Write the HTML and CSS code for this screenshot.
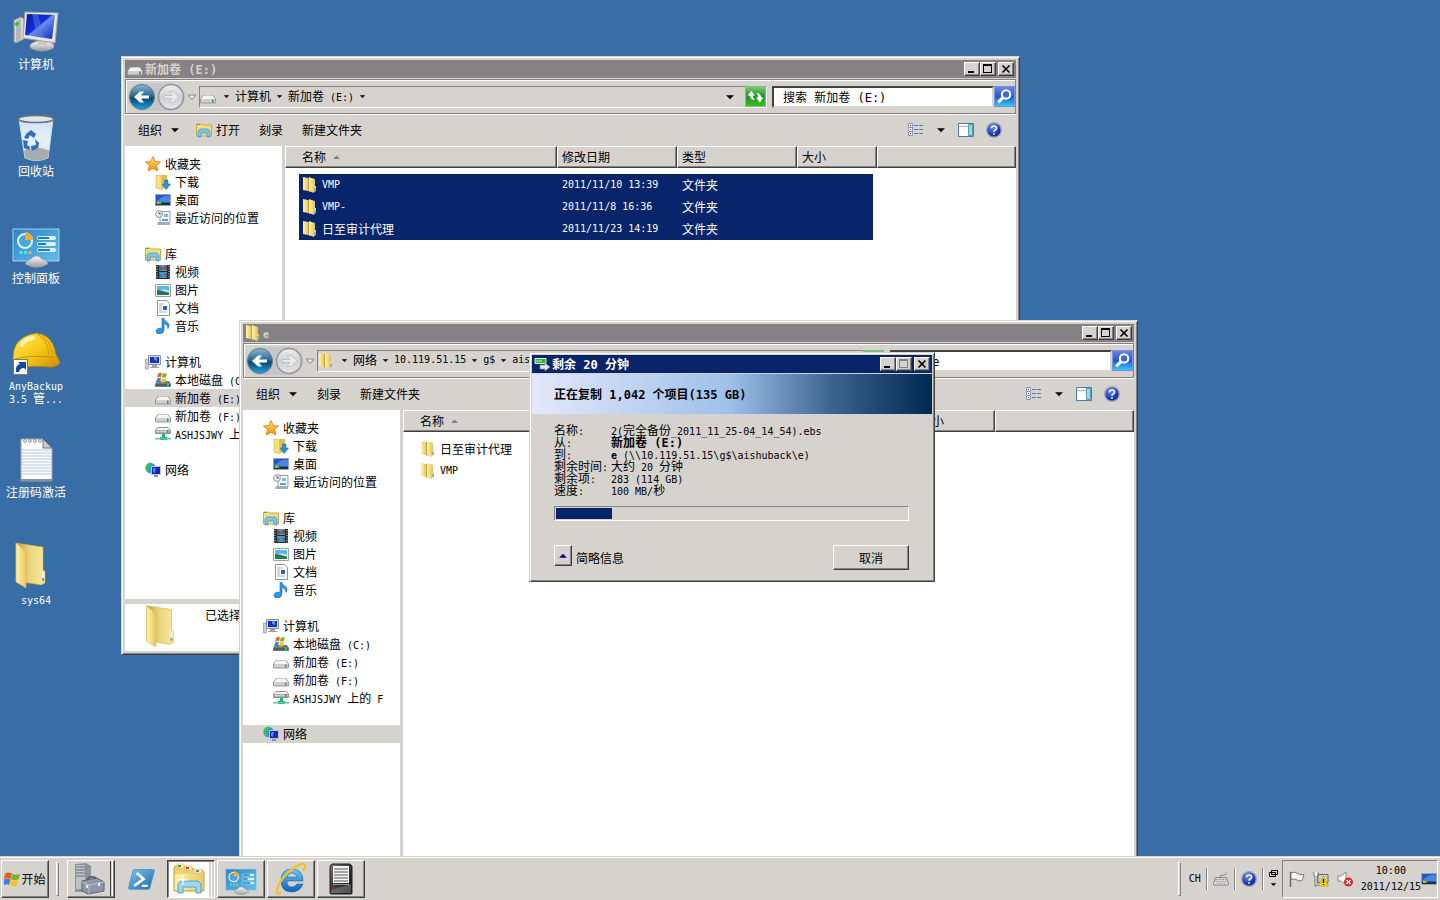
FILE: index.html
```html
<!DOCTYPE html>
<html lang="zh-CN">
<head>
<meta charset="utf-8">
<title>桌面</title>
<link rel="stylesheet" href="styles.css">
</head>
<body>
<svg class="defs" aria-hidden="true">
  <defs>
    <linearGradient id="gScreen" x1="0" y1="0" x2="1" y2="1"><stop offset="0" stop-color="#0a18a0"/><stop offset=".45" stop-color="#1230d8"/><stop offset=".5" stop-color="#6a90f0"/><stop offset="1" stop-color="#0c22b8"/></linearGradient>
    <linearGradient id="gMetal" x1="0" y1="0" x2="0" y2="1"><stop offset="0" stop-color="#fafafa"/><stop offset="1" stop-color="#9a9a9c"/></linearGradient>
    <linearGradient id="gGlass" x1="0" y1="0" x2="0" y2="1"><stop offset="0" stop-color="#cfe2f8"/><stop offset=".6" stop-color="#eaf2fb"/><stop offset="1" stop-color="#c4c8cc"/></linearGradient>
    <linearGradient id="gPanel" x1="0" y1="0" x2="1" y2="1"><stop offset="0" stop-color="#2d86c4"/><stop offset="1" stop-color="#62bdec"/></linearGradient>
    <linearGradient id="gFold" x1="0" y1="0" x2="1" y2="0"><stop offset="0" stop-color="#fdf3b0"/><stop offset="1" stop-color="#e8c95c"/></linearGradient>
    <linearGradient id="gFoldIn" x1="0" y1="0" x2="1" y2="0"><stop offset="0" stop-color="#c9a640"/><stop offset=".5" stop-color="#ecd680"/><stop offset="1" stop-color="#f8e89c"/></linearGradient>
    <linearGradient id="gHat" x1="0" y1="0" x2="1" y2="1"><stop offset="0" stop-color="#ffe65a"/><stop offset=".5" stop-color="#f8c818"/><stop offset="1" stop-color="#c88a08"/></linearGradient>
    <linearGradient id="gBack" x1="0" y1="0" x2="0" y2="1"><stop offset="0" stop-color="#8ab8d4"/><stop offset=".45" stop-color="#2a6a98"/><stop offset=".55" stop-color="#0b4674"/><stop offset="1" stop-color="#18a8e4"/></linearGradient>
    <linearGradient id="gFwd" x1="0" y1="0" x2="0" y2="1"><stop offset="0" stop-color="#eceef0"/><stop offset=".5" stop-color="#cfd1d3"/><stop offset="1" stop-color="#e4e5e6"/></linearGradient>
    <linearGradient id="gGreen" x1="0" y1="0" x2="0" y2="1"><stop offset="0" stop-color="#7cca78"/><stop offset=".5" stop-color="#1f9424"/><stop offset="1" stop-color="#37c418"/></linearGradient>
    <linearGradient id="gSearch" x1="0" y1="0" x2="0" y2="1"><stop offset="0" stop-color="#6c86e8"/><stop offset=".5" stop-color="#2454dc"/><stop offset="1" stop-color="#30d0f8"/></linearGradient>
    <radialGradient id="gHelp" cx=".4" cy=".3" r=".8"><stop offset="0" stop-color="#6a8cf0"/><stop offset=".6" stop-color="#1c3cb8"/><stop offset="1" stop-color="#0c1c80"/></radialGradient>
    <linearGradient id="gStar" x1="0" y1="0" x2="0" y2="1"><stop offset="0" stop-color="#ffe070"/><stop offset="1" stop-color="#f89010"/></linearGradient>
    <linearGradient id="gPs" x1="0" y1="0" x2="1" y2="1"><stop offset="0" stop-color="#7cc4f0"/><stop offset="1" stop-color="#1c68b0"/></linearGradient>
    <linearGradient id="gIe" x1="0" y1="0" x2="0" y2="1"><stop offset="0" stop-color="#6cc8f8"/><stop offset="1" stop-color="#0c60b8"/></linearGradient>
    <linearGradient id="gDark" x1="0" y1="0" x2="1" y2="1"><stop offset="0" stop-color="#777"/><stop offset=".5" stop-color="#333"/><stop offset="1" stop-color="#111"/></linearGradient>
  </defs>

  <symbol id="d-computer" viewBox="0 0 48 48">
    <path d="M2 14l7-3 3 2v20l-8 4-2-1z" fill="#d8d8d8" stroke="#8e8e90"/>
    <path d="M4 15l5-2v20l-5 3z" fill="#b4b6b8"/><circle cx="5" cy="18" r="2" fill="#28c828"/>
    <ellipse cx="30" cy="40" rx="12" ry="5" fill="url(#gMetal)" stroke="#a8a8a8" stroke-width=".6"/>
    <path d="M26 32h9v7h-9z" fill="#c8c8ca"/>
    <path d="M13 6l33 1-3 30-32-5z" fill="#e8e6de" stroke="#aaa69a"/>
    <path d="M15 8l28 1-3 24-27-4z" fill="url(#gScreen)"/>
    <path d="M20 8h6l6 23-7-1z" fill="#5c7ce8" opacity=".5"/>
  </symbol>
  <symbol id="d-bin" viewBox="0 0 48 48">
    <path d="M7 6h34l-5 39q-12 5-23 0z" fill="url(#gGlass)" stroke="#d8e0e8"/>
    <path d="M12 38q12-7 25 0l-1 7q-12 5-23 0z" fill="#a8acb0"/>
    <ellipse cx="24" cy="6" rx="17.500" ry="3.500" fill="#dfe7ef" stroke="#707478" stroke-width="1.600"/>
    <g fill="#2a6cc8"><path d="M14 21l5-4 5 4-2 4-4-3-2 4-4-1z"/><path d="M11 27l5 1-1 4 3 2-1 3-5-2z"/><path d="M19 33l5-1-1-6 4 4-1 5-6 3z"/></g>
  </symbol>
  <symbol id="d-panel" viewBox="0 0 48 48">
    <path d="M1 9h46v32H1z" fill="url(#gPanel)" stroke="#9ad4f0"/>
    <circle cx="13" cy="21" r="7" fill="#4da4d8" stroke="#e0f4ff" stroke-width="2"/>
    <path d="M13 12a8 8 0 0 1 8 8h-8z" fill="#f8a838"/>
    <g fill="#e0f4ff"><rect x="25" y="16" width="19" height="4" rx="2"/><rect x="25" y="22" width="19" height="4" rx="2"/><rect x="25" y="28" width="19" height="4" rx="2"/></g>
    <g fill="#1480c8"><path d="M26 17h11v2H26zM26 23h8v2h-8zM26 29h12v2H26z"/></g>
    <circle cx="9" cy="32.500" r="1.700" fill="#4de4f0"/><circle cx="13.500" cy="32.500" r="1.700" fill="#4de4f0"/><circle cx="18" cy="32.500" r="1.700" fill="#f8a838"/>
    <path d="M13 44q2-4 6-5 5-6 11 0 5 1 6 5-11 7-23 0z" fill="url(#gMetal)" stroke="#999" stroke-width=".5"/>
  </symbol>
  <symbol id="d-hat" viewBox="0 -4 48 48">
    <path d="M1 27Q1 11 14 5q10-5 20 0 8 6 10 18l4 8q-2 6-12 5-18-2-34 2z" fill="url(#gHat)" stroke="#a87808" stroke-width=".7"/>
    <path d="M3 28q14-4 38-2" fill="none" stroke="#c89010"/>
    <path d="M24 2q12 6 13 22M29 3q9 6 12 20" fill="none" stroke="#d8a410" stroke-width="1.300"/>
    <path d="M10 14q3-6 11-7" stroke="#fffbd0" stroke-width="4" stroke-linecap="round" fill="none" opacity=".8"/>
    <path d="M1.500 28.500h14v15h-14z" fill="#fff" stroke="#777"/>
    <path d="M4 41q-1-7 4-8l-2-2h8v8l-2-2q-4 0-5 4z" fill="#1848a0"/>
  </symbol>
  <symbol id="d-note" viewBox="0 -4 48 48">
    <path d="M9 1h22l9 9v33H9z" fill="#fbfcff" stroke="#a0a0a4"/><path d="M9 41h31v2H9z" fill="#909094"/>
    <path d="M10 12h29M10 15h29M10 18h29M10 21h29M10 24h29M10 27h29M10 30h29M10 33h29M10 36h29" stroke="#b4c8e4"/>
    <path d="M31 1v9h9z" fill="#c8ccd4" stroke="#707480"/>
    <g fill="none" stroke="#999"><circle cx="13" cy="3" r="1.400"/><circle cx="18" cy="3" r="1.400"/><circle cx="23" cy="3" r="1.400"/><circle cx="28" cy="3" r="1.400"/></g>
  </symbol>
  <symbol id="d-folder" viewBox="0 0 48 48">
    <path d="M4 2l27 4v23l2 1v12l-4 2-25-4z" fill="url(#gFoldIn)" stroke="#c8a848" stroke-width=".6"/>
    <path d="M4 2l10 9v36L4 41z" fill="url(#gFold)" stroke="#d8b850" stroke-width=".6"/>
    <path d="M30 30l2 1v9l-2-1z" fill="#e8f4fc"/><path d="M30 37h2v3h-2z" fill="#48a8d0"/>
  </symbol>

  <symbol id="i-folder" viewBox="0 0 16 16"><path d="M8 1l5 1v12l-4 1z" fill="#e4c45c"/><path d="M1 0l5 1v13l-5-1z" fill="url(#gFold)"/><path d="M6 1h2v14l-2-1z" fill="#c8a03c"/><path d="M7 0l5 2v14l-5-2z" fill="url(#gFold)"/><path d="M12 9h2v5l-2 1z" fill="#ecd270"/><path d="M12.500 11h1v3h-1z" fill="#38a0c8"/></symbol>
  <symbol id="i-drive" viewBox="0 0 16 16"><path d="M3 6h10l3 4v3q0 1.500-1.500 1.500h-13Q0 14.500 0 13v-3z" fill="#98989c"/><path d="M3.500 6.500h9L15 10H1z" fill="#f4f4f4"/><path d="M1 10h14v3.500H1z" fill="#d0d0d4"/><path d="M12 10.500h1.500v3H12z" fill="#20a830"/></symbol>
  <symbol id="i-netdrive" viewBox="0 0 16 16"><path d="M3 1h10l3 3v3q0 1-1 1H1q-1 0-1-1V4z" fill="#909094"/><path d="M3 2h10l2 2H1z" fill="#f4f4f4"/><path d="M1 4.500h14v2H1z" fill="#cfcfd3"/><path d="M12 4h1.500v3H12z" fill="#20a830"/><path d="M7 8h3v3h2v3H5v-3h2z" fill="#20b870"/><path d="M0 12h16v1.500H0z" fill="#60c8a0"/></symbol>
  <symbol id="i-sysdrive" viewBox="0 0 16 16"><path d="M2 9h12l2 3v3H0v-3z" fill="#707c84"/><path d="M1 12h14v2H1z" fill="#48606c"/><path d="M12 12h2v2h-2z" fill="#38d048"/><path d="M3 2q2-2 4-1L6 5Q4 4 2 6z" fill="#f06020"/><path d="M8 1q2 1 4 0l-1 4q-2 1-4 0z" fill="#70b828"/><path d="M2 7q2-2 4-1l-1 4q-2-1-4 0z" fill="#3088e0"/><path d="M7 6q2 1 4 0l-1 4q-2 1-4 0z" fill="#f8c020"/></symbol>
  <symbol id="i-star" viewBox="0 0 16 16"><path d="M8 .500l2.200 5 5.300.500-4 3.500 1.300 5.500L8 12.200 3.200 15l1.300-5.500L.500 6l5.300-.500z" fill="url(#gStar)" stroke="#d87808" stroke-width=".8"/></symbol>
  <symbol id="i-down" viewBox="0 0 16 16"><path d="M1 1l6 1v14l-6-2z" fill="#f8e080" stroke="#c8a03c" stroke-width=".5"/><path d="M6 1h6v13l-5 1z" fill="#e0bc50"/><path d="M9.500 6h3.500v4h2.500l-4.200 5.500L7 10h2.500z" fill="#2c90dc" stroke="#1460a8" stroke-width=".5"/></symbol>
  <symbol id="i-desk" viewBox="0 0 16 16"><path d="M.500 2.500h15v11H.500z" fill="#2258c0" stroke="#98a4b4"/><path d="M2 9Q8 3 15 4v6H2z" fill="#4c84e0"/><path d="M1 11h14v2H1z" fill="#20303c"/><path d="M2 9l2 1v2H2z" fill="#f8a020"/><path d="M4 10l2-1v3H4z" fill="#48c050"/></symbol>
  <symbol id="i-recent" viewBox="0 0 16 16"><path d="M5 1.500h10v11H5z" fill="#f4f8fc" stroke="#98a0a8"/><path d="M9 4h4v3H9z" fill="#80bce0"/><path d="M7 9h6v2H7z" fill="#40a8d8"/><circle cx="4" cy="4" r="3.400" fill="#eef2f6" stroke="#8c949c"/><path d="M4 2v2h2" stroke="#334" fill="none" stroke-width=".8"/><path d="M3 12h12v3H2z" fill="#a8acb0"/></symbol>
  <symbol id="i-lib" viewBox="0 0 16 16"><path d="M.500 2h5l1 1h9v11H.500z" fill="#f4dc80" stroke="#cca848"/><path d="M1 2h3v1H1z" fill="#50b040"/><path d="M2 15V9l2-2h8l2 2v6h-3v-4H5v4z" fill="#7cc8ec" stroke="#3c90c4" stroke-width=".7"/></symbol>
  <symbol id="i-video" viewBox="0 0 16 16"><path d="M1 1h14v14H1z" fill="#222c34"/><path d="M4 1h8v6H4zM4 8h8v6H4z" fill="#3898d0"/><path d="M4 1l4 3 4-3v5L8 5 4 7zM4 9l3 3-3 2zM12 9l-3 2 3 2z" fill="#984838"/><path d="M2 2v13M14 2v13" stroke="#e0e4e8" stroke-dasharray="1 1.500"/></symbol>
  <symbol id="i-pic" viewBox="0 0 16 16"><path d="M.500 2.500h15v12H.500z" fill="#fff" stroke="#a0a0a4"/><path d="M2 4h12v9H2z" fill="#58b4ec"/><path d="M2 9q6-3 12 0v1H2z" fill="#e0f0f0"/><path d="M2 8q5 0 12 3v2H2z" fill="#207c50"/></symbol>
  <symbol id="i-doc" viewBox="0 0 16 16"><path d="M2.500.500h9l3 3v12h-12z" fill="#fff" stroke="#909498"/><path d="M4 4h5M4 6h3M4 8h3M4 10h3M4 12h8" stroke="#a0b0c0"/><path d="M8 6h4v4H8z" fill="#2864b0"/></symbol>
  <symbol id="i-music" viewBox="0 0 16 16"><path d="M7 0h1.500q1 3 4 4.500 3 2 .500 6 0-4-4-5v6q0 4-4 4.500-4 0-4-2.500 0-3 4-3.500l2 .500z" fill="#2c98e4" stroke="#1468b4" stroke-width=".6"/></symbol>
  <symbol id="i-pc" viewBox="0 0 16 16"><path d="M.500 5h3v10h-3z" fill="#d0d0d4" stroke="#888" stroke-width=".6"/><path d="M3.500 1.500h12v9h-12z" fill="#dcdcd8" stroke="#90908c"/><path d="M5 3h9v6H5z" fill="#1430c8"/><path d="M9 3h3v4l-3-1z" fill="#6484f0"/><path d="M7 11h5v2h2v1H5v-1h2z" fill="#a0a0a4"/></symbol>
  <symbol id="i-net" viewBox="0 0 16 16"><circle cx="5.500" cy="6" r="5.200" fill="#2c9cd8"/><path d="M2 2q3-2 5-1l-2 3-3 2 2 2-1 2Q0 7 1 4z" fill="#48c048"/><path d="M6.500 4.500h9v8h-9z" fill="#1428b0" stroke="#c0c4cc"/><path d="M8 6h3l-1 5-2-1z" fill="#5878f0"/><path d="M9 13h4v2H9z" fill="#8890a0"/></symbol>
  <symbol id="i-copy" viewBox="0 0 16 16"><path d="M1 2.500h11v5H1z" fill="#20b838" stroke="#e8f0e8"/><path d="M2 4h6v2H2z" fill="#60e070"/><path d="M6 9h5V7l5 4-5 4v-2H6z" fill="#e4e4e4" stroke="#909090" stroke-width=".6"/></symbol>

  <symbol id="i-navback" viewBox="0 0 28 28"><circle cx="14" cy="14" r="12.500" fill="url(#gBack)" stroke="#6c7880"/><path d="M21 12.500v3h-8l3 4h-4l-6-5.500 6-5.500h4l-3 4z" fill="#fff"/></symbol>
  <symbol id="i-navfwd" viewBox="0 0 28 28"><circle cx="14" cy="14" r="12.500" fill="url(#gFwd)" stroke="#949698" stroke-width="1.500"/><path d="M7 12.500v3h8l-3 4h4l6-5.500-6-5.500h-4l3 4z" fill="#e8e9ea" stroke="#bbbdc0" stroke-width=".8"/></symbol>
  <symbol id="i-chev" viewBox="0 0 10 10"><path d="M1 3h8L5 7.500z" fill="#eef0f8" stroke="#84868c"/></symbol>
  <symbol id="i-tri" viewBox="0 0 9 9"><path d="M1 3h7L4.500 6.500z" fill="currentColor"/></symbol>
  <symbol id="i-triup" viewBox="0 0 9 9"><path d="M1 6h7L4.500 2.500z" fill="currentColor"/></symbol>
  <symbol id="i-refresh" viewBox="0 0 20 20"><path d="M.500.500h19v19H.500z" fill="url(#gGreen)" stroke="#8cb88c"/><path d="M2.500 9L6 4.500 9.500 9H7.500q0 3 2 4.500Q5 13 4.500 9zM17.500 11L14 16l-3.500-5h2q0-3-2-4.500Q15 7 15.500 11z" fill="#fff"/></symbol>
  <symbol id="i-search" viewBox="0 0 20 20"><path d="M.500.500h19v19H.500z" fill="url(#gSearch)" stroke="#7c94cc"/><circle cx="11.500" cy="8" r="4" fill="#3c68d8" stroke="#fff" stroke-width="2"/><path d="M8.500 11L4 15.500" stroke="#fff" stroke-width="3"/></symbol>
  <symbol id="i-help" viewBox="0 0 16 16"><circle cx="8" cy="8" r="7.300" fill="url(#gHelp)" stroke="#a0a4b4" stroke-width="1.400"/><path d="M5.500 6.200Q5.500 4 8 4q2.600 0 2.600 2 0 1.200-1.500 2Q8 8.600 8 9.800M8 11.200v1.600" stroke="#fff" stroke-width="1.700" fill="none"/></symbol>
  <symbol id="i-views" viewBox="0 0 16 14"><g fill="#fff" stroke="#8898b8"><path d="M.500.500h4v4h-4zM.500 4.500h4v4h-4zM.500 8.500h4v4h-4z"/></g><path d="M2 2h1v1H2zM2 10h1v1H2z" fill="#346"/><path d="M2 6h1v1H2z" fill="#d02020"/><path d="M6 2.500h4M11 2.500h4M6 6.500h4M11 6.500h4M6 10.500h4M11 10.500h4" stroke="#6078a0"/></symbol>
  <symbol id="i-pane" viewBox="0 0 16 14"><path d="M.500.500h15v13H.500z" fill="#fff" stroke="#5078a8"/><path d="M1 3.500h9" stroke="#a8b8d0"/><path d="M10.500 1.500h4v11h-4z" fill="#90dcec" stroke="#5898b8"/></symbol>
  <symbol id="c-min" viewBox="0 0 12 10"><path d="M2 7h6v2H2z"/></symbol>
  <symbol id="c-max" viewBox="0 0 12 10"><path d="M1 0h9v9H1zM2 2v6h7V2z" fill="currentColor" fill-rule="evenodd"/></symbol>
  <symbol id="c-close" viewBox="0 0 12 10"><path d="M2.500 1.500l7 7M9.500 1.500l-7 7" stroke="#000" stroke-width="1.700"/></symbol>

  <symbol id="t-flag" viewBox="0 0 16 16"><path d="M1 3q3-2.500 7-.500L6.500 8Q3.500 6.500 0 8z" fill="#f05820"/><path d="M8.500 3q4 1.500 7.500 0L14.500 8.500q-3.500 1.500-7.500 0z" fill="#70b830"/><path d="M0 8.500q3.500-1.500 6.500 0L5 14q-2-1.500-5 0z" fill="#3c80e0"/><path d="M6.500 9.300q4 1.500 7.500 0L13 14.500q-4 1.500-7.500-.500z" fill="#f8c020"/></symbol>
  <symbol id="t-server" viewBox="0 0 32 32"><path d="M2 1l11-1 5 3v22l-6 4H2z" fill="#8c9298"/><path d="M3 2h9v24H3z" fill="#bcc2c8"/><path d="M3 4h9M3 7h9M3 10h9M3 13h9" stroke="#687078"/><path d="M9 18l15-3 7 4v9l-16 3-6-3z" fill="#8c98a8" stroke="#586474"/><path d="M9 19l7 3 15-3M16 22v9" stroke="#b8c4d0" fill="none"/><path d="M14 17q2-5 9-2" fill="none" stroke="#566070" stroke-width="2"/><path d="M13 22h2v3h-2zM25 20h2v3h-2z" fill="#e8e8e8"/></symbol>
  <symbol id="t-ps" viewBox="0 0 32 28"><path d="M8 3h22q2 0 1.500 2l-5 19q-.500 2-2.500 2H3q-2 0-1.500-2l5-19Q7 3 8 3z" fill="url(#gPs)" stroke="#4c90c8"/><path d="M11 7l8 7-11 8" fill="none" stroke="#fff" stroke-width="3"/><path d="M17 22h7" stroke="#fff" stroke-width="2.500"/></symbol>
  <symbol id="t-explorer" viewBox="0 0 32 32"><path d="M2 3h9l2 2h7l1 2h8l2 2v19H1V5z" fill="#f0d070" stroke="#c8a040"/><path d="M4 1h7v4H4zM12 3h7v4h-7zM21 6h8v4h-8z" fill="#fff6c8" stroke="#d0b060" stroke-width=".6"/><path d="M5 2h3v2H5z" fill="#28a830"/><path d="M13 4h3v2h-3z" fill="#d84030"/><path d="M23 7h3v2h-3z" fill="#3098d8"/><path d="M2 11h28v16H2z" fill="url(#gFold)"/><path d="M5 30V21l3-3h17l3 3v9h-5v-6H10v6z" fill="#9cd8f4" stroke="#50a0c8"/><path d="M10 12v10M5 17h10" stroke="#fff" stroke-width="1.200"/></symbol>
  <symbol id="t-ie" viewBox="0 0 32 32"><path d="M28 18H12q0 6 5 6 3 0 5-3h6q-3 8-11 8-11 0-11-11.500T17 6q11 0 11 12zm-6-4q-1-4-5-4t-5 4z" fill="url(#gIe)" fill-rule="evenodd" stroke="#0c58a0" stroke-width=".5"/><path d="M6 30Q1 32 2 27 5 14 20 4q8-5 10-2 1 2-2 6" fill="none" stroke="#f8c020" stroke-width="2.200"/></symbol>
  <symbol id="t-rack" viewBox="0 0 24 32"><path d="M3 1h18l2 2v27q0 1-1 1H2q-1 0-1-1V3z" fill="url(#gDark)" stroke="#222"/><path d="M4 3h16v17H4z" fill="#f4f4f4"/><path d="M5 6h14M5 9h14M5 12h14M5 15h14M5 18h14" stroke="#555"/><path d="M2 27L22 21v9H2z" fill="#c8c8c8" opacity=".35"/><path d="M4 21h16v1H4z" fill="#999"/><circle cx="5" cy="25" r="1" fill="#e02020"/><circle cx="9" cy="25" r="1" fill="#208040"/></symbol>
  <symbol id="t-kbd" viewBox="0 0 17 16"><path d="M2.500 6.500h12l2 7q0 1-1 1h-14q-1 0-1-1z" fill="#e0e0dc" stroke="#808080"/><path d="M3 8.500h11M2.500 10.500h12M4 12.500h9" stroke="#888" stroke-dasharray="1.500 1"/><path d="M8 6V4h4q2 0 2-3" stroke="#888" fill="none"/></symbol>
  <symbol id="t-restore" viewBox="0 0 9 7"><path d="M2.500.500h6v4h-6zM.500 2.500h6v4h-6z" fill="#d6d3ce" stroke="#000"/></symbol>
  <symbol id="t-notify" viewBox="0 0 16 16"><path d="M1.500 1v15" stroke="#666" stroke-width="1.400"/><path d="M2 1.500q4-1 7 1 1 2 6 1l-2 6q-4 1-6-1-2-1-5 0z" fill="#f8f8f8" stroke="#777"/></symbol>
  <symbol id="t-lan" viewBox="0 0 16 16"><path d="M5 3.500h10v8H5z" fill="#d0d0cc" stroke="#686868"/><path d="M1 1v4h1v10h2V5h1V1" fill="#fff" stroke="#555" stroke-width=".8"/><path d="M10.500 5l5 10h-10z" fill="#f8d818" stroke="#b89000" stroke-width=".6"/><path d="M10.500 8v4M10.500 13v1" stroke="#000" stroke-width="1.300"/></symbol>
  <symbol id="t-sound" viewBox="0 0 16 16"><path d="M1 5h3l5-4v13l-5-4H1z" fill="#fafafa" stroke="#888"/><circle cx="11.500" cy="11" r="4.500" fill="#e02828"/><path d="M9.500 9l4 4M13.500 9l-4 4" stroke="#fff" stroke-width="1.400"/></symbol>
</svg>

<main class="desktop">
  <nav class="shortcuts" aria-label="桌面图标">
    <a class="shortcut" href="#"><svg><use href="#d-computer"/></svg><span>计算机</span></a>
    <a class="shortcut" href="#"><svg><use href="#d-bin"/></svg><span>回收站</span></a>
    <a class="shortcut" href="#"><svg><use href="#d-panel"/></svg><span>控制面板</span></a>
    <a class="shortcut" href="#"><svg><use href="#d-hat"/></svg><span><span class="l">AnyBackup<br>3.5 </span>管<span class="l">...</span></span></a>
    <a class="shortcut" href="#"><svg><use href="#d-note"/></svg><span>注册码激活</span></a>
    <a class="shortcut" href="#"><svg><use href="#d-folder"/></svg><span><span class="l">sys64</span></span></a>
  </nav>

  <section class="window win-e">
    <header class="titlebar">
      <svg class="ico"><use href="#i-drive"/></svg>
      <h1>新加卷<span class="l big"> (E:)</span></h1>
      <button class="ctl" aria-label="最小化"><svg><use href="#c-min"/></svg></button><button class="ctl" aria-label="最大化"><svg><use href="#c-max"/></svg></button><button class="ctl close" aria-label="关闭"><svg><use href="#c-close"/></svg></button>
    </header>
    <div class="navbar">
      <div class="travel">
        <button aria-label="后退"><svg><use href="#i-navback"/></svg></button><button aria-label="前进"><svg><use href="#i-navfwd"/></svg></button>
      </div>
      <button class="history" aria-label="历史"><svg class="chev"><use href="#i-chev"/></svg></button>
      <div class="address">
        <svg class="ico"><use href="#i-drive"/></svg>
        <svg class="tri"><use href="#i-tri"/></svg><a href="#">计算机</a>
        <svg class="tri"><use href="#i-tri"/></svg><a href="#">新加卷<span class="l"> (E:)</span></a>
        <svg class="tri"><use href="#i-tri"/></svg>
        <button class="drop" aria-label="以前的位置"><svg class="tri big"><use href="#i-tri"/></svg></button>
        <button class="square" aria-label="刷新"><svg><use href="#i-refresh"/></svg></button>
      </div>
      <input class="search" type="text" aria-label="搜索" value="搜索 新加卷 (E:)">
      <button class="square" aria-label="搜索"><svg><use href="#i-search"/></svg></button>
    </div>
    <div class="toolbar">
      <button>组织<svg class="tri big"><use href="#i-tri"/></svg></button>
      <button class="open"><svg class="ico"><use href="#i-lib"/></svg>打开</button>
      <button>刻录</button>
      <button>新建文件夹</button>
      <div class="tools">
        <button aria-label="更改视图"><svg class="flat"><use href="#i-views"/></svg></button>
        <button aria-label="更多选项"><svg class="tri big"><use href="#i-tri"/></svg></button>
        <button aria-label="预览窗格"><svg class="flat"><use href="#i-pane"/></svg></button>
        <button aria-label="帮助"><svg class="ico"><use href="#i-help"/></svg></button>
      </div>
    </div>
    <div class="body">
      <nav class="tree">
        <ul>
          <li><a href="#"><svg class="ico"><use href="#i-star"/></svg><span>收藏夹</span></a></li>
          <li class="sub"><a href="#"><svg class="ico"><use href="#i-down"/></svg><span>下载</span></a></li>
          <li class="sub"><a href="#"><svg class="ico"><use href="#i-desk"/></svg><span>桌面</span></a></li>
          <li class="sub"><a href="#"><svg class="ico"><use href="#i-recent"/></svg><span>最近访问的位置</span></a></li>
        </ul>
        <ul>
          <li><a href="#"><svg class="ico"><use href="#i-lib"/></svg><span>库</span></a></li>
          <li class="sub"><a href="#"><svg class="ico"><use href="#i-video"/></svg><span>视频</span></a></li>
          <li class="sub"><a href="#"><svg class="ico"><use href="#i-pic"/></svg><span>图片</span></a></li>
          <li class="sub"><a href="#"><svg class="ico"><use href="#i-doc"/></svg><span>文档</span></a></li>
          <li class="sub"><a href="#"><svg class="ico"><use href="#i-music"/></svg><span>音乐</span></a></li>
        </ul>
        <ul>
          <li><a href="#"><svg class="ico"><use href="#i-pc"/></svg><span>计算机</span></a></li>
          <li class="sub"><a href="#"><svg class="ico"><use href="#i-sysdrive"/></svg><span>本地磁盘<span class="l"> (C:)</span></span></a></li>
          <li class="sub current"><a href="#"><svg class="ico"><use href="#i-drive"/></svg><span>新加卷<span class="l"> (E:)</span></span></a></li>
          <li class="sub"><a href="#"><svg class="ico"><use href="#i-drive"/></svg><span>新加卷<span class="l"> (F:)</span></span></a></li>
          <li class="sub"><a href="#"><svg class="ico"><use href="#i-netdrive"/></svg><span><span class="l">ASHJSJWY </span>上的<span class="l"> F</span></span></a></li>
        </ul>
        <ul>
          <li><a href="#"><svg class="ico"><use href="#i-net"/></svg><span>网络</span></a></li>
        </ul>
      </nav>
      <div class="files">
        <table>
          <thead><tr><th class="name">名称<svg class="tri sort"><use href="#i-triup"/></svg></th><th class="date">修改日期</th><th class="type">类型</th><th class="size">大小</th><th></th></tr></thead>
          <tbody>
            <tr class="selected"><td class="name"><span><svg class="ico"><use href="#i-folder"/></svg><span class="l">VMP</span></span></td><td class="l">2011/11/10 13:39</td><td>文件夹</td><td class="size"></td><td></td></tr>
            <tr class="selected"><td class="name"><span><svg class="ico"><use href="#i-folder"/></svg><span class="l">VMP-</span></span></td><td class="l">2011/11/8 16:36</td><td>文件夹</td><td class="size"></td><td></td></tr>
            <tr class="selected"><td class="name"><span><svg class="ico"><use href="#i-folder"/></svg>日至审计代理</span></td><td class="l">2011/11/23 14:19</td><td>文件夹</td><td class="size"></td><td></td></tr>
          </tbody>
        </table>
      </div>
    </div>
    <footer class="details"><svg><use href="#d-folder"/></svg><span>已选择</span></footer>
  </section>

  <section class="window win-net">
    <header class="titlebar">
      <svg class="ico"><use href="#i-folder"/></svg>
      <h1><span class="l">e</span></h1>
      <button class="ctl" aria-label="最小化"><svg><use href="#c-min"/></svg></button><button class="ctl" aria-label="最大化"><svg><use href="#c-max"/></svg></button><button class="ctl close" aria-label="关闭"><svg><use href="#c-close"/></svg></button>
    </header>
    <div class="navbar">
      <div class="travel">
        <button aria-label="后退"><svg><use href="#i-navback"/></svg></button><button aria-label="前进"><svg><use href="#i-navfwd"/></svg></button>
      </div>
      <button class="history" aria-label="历史"><svg class="chev"><use href="#i-chev"/></svg></button>
      <div class="address">
        <svg class="ico"><use href="#i-folder"/></svg>
        <svg class="tri"><use href="#i-tri"/></svg><a href="#">网络</a>
        <svg class="tri"><use href="#i-tri"/></svg><a class="l" href="#">10.119.51.15</a>
        <svg class="tri"><use href="#i-tri"/></svg><a class="l" href="#">g$</a>
        <svg class="tri"><use href="#i-tri"/></svg><a class="l" href="#">aishuback</a>
        <button class="drop" aria-label="以前的位置"><svg class="tri big"><use href="#i-tri"/></svg></button>
        <button class="square" aria-label="刷新"><svg><use href="#i-refresh"/></svg></button>
      </div>
      <input class="search" type="text" aria-label="搜索" value="搜索 e">
      <button class="square" aria-label="搜索"><svg><use href="#i-search"/></svg></button>
    </div>
    <div class="toolbar">
      <button>组织<svg class="tri big"><use href="#i-tri"/></svg></button>
      <button>刻录</button>
      <button>新建文件夹</button>
      <div class="tools">
        <button aria-label="更改视图"><svg class="flat"><use href="#i-views"/></svg></button>
        <button aria-label="更多选项"><svg class="tri big"><use href="#i-tri"/></svg></button>
        <button aria-label="预览窗格"><svg class="flat"><use href="#i-pane"/></svg></button>
        <button aria-label="帮助"><svg class="ico"><use href="#i-help"/></svg></button>
      </div>
    </div>
    <div class="body">
      <nav class="tree">
        <ul>
          <li><a href="#"><svg class="ico"><use href="#i-star"/></svg><span>收藏夹</span></a></li>
          <li class="sub"><a href="#"><svg class="ico"><use href="#i-down"/></svg><span>下载</span></a></li>
          <li class="sub"><a href="#"><svg class="ico"><use href="#i-desk"/></svg><span>桌面</span></a></li>
          <li class="sub"><a href="#"><svg class="ico"><use href="#i-recent"/></svg><span>最近访问的位置</span></a></li>
        </ul>
        <ul>
          <li><a href="#"><svg class="ico"><use href="#i-lib"/></svg><span>库</span></a></li>
          <li class="sub"><a href="#"><svg class="ico"><use href="#i-video"/></svg><span>视频</span></a></li>
          <li class="sub"><a href="#"><svg class="ico"><use href="#i-pic"/></svg><span>图片</span></a></li>
          <li class="sub"><a href="#"><svg class="ico"><use href="#i-doc"/></svg><span>文档</span></a></li>
          <li class="sub"><a href="#"><svg class="ico"><use href="#i-music"/></svg><span>音乐</span></a></li>
        </ul>
        <ul>
          <li><a href="#"><svg class="ico"><use href="#i-pc"/></svg><span>计算机</span></a></li>
          <li class="sub"><a href="#"><svg class="ico"><use href="#i-sysdrive"/></svg><span>本地磁盘<span class="l"> (C:)</span></span></a></li>
          <li class="sub"><a href="#"><svg class="ico"><use href="#i-drive"/></svg><span>新加卷<span class="l"> (E:)</span></span></a></li>
          <li class="sub"><a href="#"><svg class="ico"><use href="#i-drive"/></svg><span>新加卷<span class="l"> (F:)</span></span></a></li>
          <li class="sub"><a href="#"><svg class="ico"><use href="#i-netdrive"/></svg><span><span class="l">ASHJSJWY </span>上的<span class="l"> F</span></span></a></li>
        </ul>
        <ul>
          <li class="current"><a href="#"><svg class="ico"><use href="#i-net"/></svg><span>网络</span></a></li>
        </ul>
      </nav>
      <div class="files">
        <table>
          <thead><tr><th class="name">名称<svg class="tri sort"><use href="#i-triup"/></svg></th><th class="date">修改日期</th><th class="type">类型</th><th class="size">大小</th><th></th></tr></thead>
          <tbody>
            <tr><td class="name"><span><svg class="ico"><use href="#i-folder"/></svg>日至审计代理</span></td><td></td><td></td><td></td><td></td></tr>
            <tr><td class="name"><span><svg class="ico"><use href="#i-folder"/></svg><span class="l">VMP</span></span></td><td></td><td></td><td></td><td></td></tr>
          </tbody>
        </table>
      </div>
    </div>
  </section>

  <section class="window dialog" role="dialog" aria-labelledby="copy-title">
    <header class="titlebar">
      <svg class="ico"><use href="#i-copy"/></svg>
      <h1 id="copy-title">剩余<span class="l big"> 20 </span>分钟</h1>
      <button class="ctl" aria-label="最小化"><svg><use href="#c-min"/></svg></button><button class="ctl" aria-label="最大化" disabled><svg><use href="#c-max"/></svg></button><button class="ctl close" aria-label="关闭"><svg><use href="#c-close"/></svg></button>
    </header>
    <h2 class="banner">正在复制<span class="l big"> 1,042 </span>个项目<span class="l big">(135 GB)</span></h2>
    <div class="copy">
      <dl>
        <dt>名称<span class="l">:</span></dt><dd><span class="l">2(</span>完全备份<span class="l">_2011_11_25-04_14_54).ebs</span></dd>
        <dt>从<span class="l">:</span></dt><dd><b>新加卷<span class="l big"> (E:)</span></b></dd>
        <dt>到<span class="l">:</span></dt><dd><span class="l"><b>e</b> (\\10.119.51.15\g$\aishuback\e)</span></dd>
        <dt>剩余时间<span class="l">:</span></dt><dd>大约<span class="l"> 20 </span>分钟</dd>
        <dt>剩余项<span class="l">:</span></dt><dd><span class="l">283 (114 GB)</span></dd>
        <dt>速度<span class="l">:</span></dt><dd><span class="l">100 MB/</span>秒</dd>
      </dl>
      <div class="progress" role="progressbar" aria-label="复制进度" aria-valuenow="16" aria-valuemin="0" aria-valuemax="100"><div class="done" style="width: 16%"></div></div>
      <div class="actions">
        <button class="raised fold" id="fold"><svg class="tri big"><use href="#i-triup"/></svg></button>
        <label for="fold">简略信息</label>
        <button class="raised cancel">取消</button>
      </div>
    </div>
  </section>
</main>

<footer class="taskbar">
  <button class="raised start"><svg class="ico"><use href="#t-flag"/></svg>开始</button>
  <i class="grip"></i>
  <div class="tasks">
    <button class="task raised stack" aria-label="服务器管理器"><svg><use href="#t-server"/></svg></button>
    <button class="task" aria-label="PowerShell"><svg class="ps"><use href="#t-ps"/></svg></button>
    <button class="task stack pressed" aria-label="资源管理器"><svg><use href="#t-explorer"/></svg></button>
    <button class="task raised" aria-label="控制面板"><svg><use href="#d-panel"/></svg></button>
    <button class="task raised" aria-label="Internet Explorer"><svg><use href="#t-ie"/></svg></button>
    <button class="task raised" aria-label="服务器"><svg><use href="#t-rack"/></svg></button>
  </div>
  <i class="grip"></i>
  <div class="lang">
    <button class="l">CH</button><i class="line"></i>
    <button aria-label="键盘"><svg class="ico"><use href="#t-kbd"/></svg></button><i class="line"></i>
    <button aria-label="帮助"><svg class="ico"><use href="#i-help"/></svg></button><i class="line"></i>
    <div class="mini"><svg class="restore"><use href="#t-restore"/></svg><svg class="tri"><use href="#i-tri"/></svg></div>
  </div>
  <div class="tray">
    <button aria-label="操作中心"><svg class="ico"><use href="#t-notify"/></svg></button>
    <button aria-label="网络"><svg class="ico"><use href="#t-lan"/></svg></button>
    <button aria-label="音量"><svg class="ico"><use href="#t-sound"/></svg></button>
    <div class="clock">
      <time class="l">10:00<br>2011/12/15</time>
      <button aria-label="显示桌面"><svg class="ico"><use href="#i-desk"/></svg></button>
    </div>
  </div>
</footer>
</body>
</html>
```

FILE: styles.css
```css
:root {
  --face: #d6d3ce;
  --shade: #848284;
  --dark: #424142;
  --navy: #08246b;
}

* { box-sizing: border-box; }

body {
  margin: 0;
  height: 100vh;
  display: flex;
  flex-direction: column;
  overflow: hidden;
  background: #396da5;
  color: #000;
  font-family: "Noto Sans CJK SC", sans-serif;
  font-size: 12px;
  line-height: 16px;
}

h1, h2, ul, dl, dd { margin: 0; padding: 0; font-size: 12px; }
ul { list-style: none; }
a { color: inherit; text-decoration: none; }
svg { display: block; flex: none; }
button, input { font: inherit; color: inherit; border: 0; padding: 0; margin: 0; background: none; }
button { display: flex; align-items: center; justify-content: center; }

.defs { position: absolute; width: 0; height: 0; }
.ico { width: 16px; height: 16px; }
.tri { width: 7px; height: 7px; }
.tri.big { width: 10px; height: 10px; }
.l { font-family: "DejaVu Sans Mono", monospace; font-size: 10px; line-height: 1; }
.l.big { font-size: 12px; }

/* Desktop */
.desktop { position: relative; flex: 1; min-height: 0; overflow: hidden; }
.shortcuts { width: 72px; display: grid; grid-auto-rows: 107px; }
.shortcut {
  display: flex;
  flex-direction: column;
  align-items: center;
  gap: 4px;
  padding-top: 6px;
  color: #fff;
  text-align: center;
  line-height: 12px;
  white-space: nowrap;
}
.shortcut svg { width: 48px; height: 48px; }

/* Windows */
.window {
  position: absolute;
  display: flex;
  flex-direction: column;
  padding: 2px;
  background: var(--face);
  border: 1px solid;
  border-color: var(--face) var(--dark) var(--dark) var(--face);
  box-shadow: inset 1px 1px #fff, inset -1px -1px var(--shade);
  white-space: nowrap;
}
.win-e { left: 121px; top: 56px; width: 899px; height: 599px; padding: 3px; }
.win-net { left: 239px; top: 320px; width: 899px; height: 599px; padding: 3px; }
.dialog { left: 529px; top: 352px; width: 406px; }

.titlebar {
  display: flex;
  align-items: center;
  height: 18px;
  flex: none;
  padding: 0 2px;
  background: var(--shade);
  color: var(--face);
}
.titlebar h1 { flex: 1; padding-left: 2px; line-height: 18px; }
.dialog .titlebar { background: var(--navy); color: #fff; }
.ctl {
  width: 16px;
  height: 14px;
  background: var(--face);
  color: #000;
  border: 1px solid;
  border-color: #fff var(--dark) var(--dark) #fff;
  box-shadow: inset -1px -1px var(--shade);
}
.ctl svg { width: 12px; height: 10px; }
.ctl:disabled { color: var(--shade); }
.ctl.close { margin-left: 2px; }

.navbar {
  display: flex;
  align-items: center;
  height: 35px;
  flex: none;
  margin-top: 1px;
  padding: 0 0 0 2px;
  border: 1px solid var(--shade);
  box-shadow: inset 1px 1px #fff, 0 1px #fff;
}
.travel { display: flex; gap: 1px; background: #c6c6c8; border-radius: 14px; }
.travel svg { width: 28px; height: 28px; }
.history { width: 14px; }
.chev { width: 10px; height: 10px; }
.address {
  display: flex;
  align-items: center;
  flex: 1;
  height: 22px;
  margin-right: 5px;
  border: 1px solid;
  border-color: var(--shade) #fff #fff var(--shade);
}
.address a { padding: 0 5px 2px; }
.address .ico + .tri { margin-left: 7px; }
.drop { margin-left: auto; width: 30px; }
.square svg { width: 21px; height: 21px; }
.search {
  width: 222px;
  height: 22px;
  padding: 0 9px;
  background: #fff;
  border: 2px solid;
  border-color: var(--dark) var(--face) var(--face) var(--dark);
  font-family: "DejaVu Sans Mono", "Noto Sans CJK SC", monospace;
}

.toolbar { display: flex; align-items: center; gap: 19px; height: 32px; flex: none; padding: 0 14px 0 13px; }
.toolbar button { gap: 4px; }
.toolbar > button .tri { margin-left: 4px; }
.toolbar .open { margin-left: -3px; }
.tools { display: flex; align-items: center; gap: 12px; margin-left: auto; }
.flat { width: 16px; height: 14px; }

.body { display: flex; flex: 1; min-height: 0; }
.tree {
  width: 160px;
  flex: none;
  display: flex;
  flex-direction: column;
  gap: 18px;
  padding-top: 9px;
  background: #fff;
  border-right: 3px solid var(--face);
  overflow: hidden;
}
.tree a { display: flex; align-items: center; gap: 4px; height: 18px; padding-left: 20px; }
.tree .sub a { padding-left: 30px; }
.tree .current { background: var(--face); }

.files { flex: 1; min-width: 0; background: #fff; }
table { width: 100%; table-layout: fixed; border-collapse: separate; border-spacing: 0; }
th {
  height: 22px;
  padding: 0 4px;
  background: var(--face);
  border: 1px solid;
  border-color: #fff var(--dark) var(--dark) #fff;
  box-shadow: inset -1px -1px var(--shade);
  font-weight: 400;
  text-align: left;
}
th.name { width: 272px; padding-left: 16px; }
th.date, th.type { width: 120px; }
th.size { width: 80px; }
.sort { display: inline-block; width: 9px; height: 9px; margin-left: 6px; color: var(--shade); }
tbody::before { content: ""; display: block; height: 6px; }
td { height: 22px; padding: 0 5px; }
td.name { padding: 0 0 0 14px; }
td.name > span { display: flex; align-items: center; gap: 4px; height: 22px; padding-left: 3px; }
.selected td { color: #fff; background: var(--navy); background-clip: border-box; }
.selected td.name { background-clip: content-box; }
.selected td.size { padding: 0 4px 0 0; background-clip: content-box; }
.selected td:last-child { background: none; }

.details { display: flex; gap: 16px; height: 52px; flex: none; padding-left: 16px; background: #fff; border-top: 5px solid var(--face); }
.details svg { width: 48px; height: 44px; }
.details span { padding-top: 3px; }

/* Copy dialog */
.banner {
  height: 40px;
  margin-top: 1px;
  padding-left: 22px;
  line-height: 40px;
  background: linear-gradient(90deg, #e4e8fb, #9cbfe8 50%, #3c648f 75%, #002852);
}
.copy { padding: 10px 23px 9px 22px; }
dl { display: grid; grid-template-columns: 57px 1fr; grid-auto-rows: 12px; line-height: 12px; }
.progress { height: 15px; margin-top: 10px; padding: 1px; border: 1px solid; border-color: var(--shade) #fff #fff var(--shade); }
.done { height: 11px; background: var(--navy); }
.actions { display: flex; align-items: flex-start; gap: 4px; margin-top: 24px; }
.actions label { padding-top: 5px; }
.raised {
  background: var(--face);
  border: 1px solid;
  border-color: #fff var(--dark) var(--dark) #fff;
  box-shadow: inset -1px -1px var(--shade);
}
.fold { width: 18px; height: 21px; color: #000080; }
.cancel { width: 76px; height: 25px; margin-left: auto; }

/* Taskbar */
.taskbar {
  display: flex;
  align-items: center;
  height: 44px;
  flex: none;
  padding: 1px 2px 0 1px;
  background: var(--face);
  border-top: 1px solid var(--face);
  box-shadow: inset 0 1px #fff;
}
.start { width: 48px; height: 38px; gap: 1px; }
.grip { width: 3px; height: 34px; margin: 0 8px 0 7px; border: 1px solid; border-color: #fff var(--shade) var(--shade) #fff; }
.tasks { display: flex; gap: 2px; flex: 1; }
.task { width: 48px; height: 38px; }
.task svg { width: 32px; height: 32px; }
.task .ps { width: 28px; height: 24px; }
.stack { padding-right: 4px; box-shadow: inset -1px -1px var(--shade), inset -2px 0 #fff, inset -3px 0 var(--face), inset -4px 0 var(--dark); }
.pressed {
  background: #fff;
  border: 1px solid;
  border-color: var(--dark) #fff #fff var(--dark);
  box-shadow: inset 1px 1px var(--shade), inset -2px 0 var(--face), inset -3px 0 #fff, inset -5px 0 var(--face);
}
.lang { display: flex; align-items: center; gap: 5px; margin-right: 4px; }
.line { width: 2px; height: 22px; border-left: 1px solid var(--shade); border-right: 1px solid #fff; }
.mini { display: flex; flex-direction: column; align-items: center; gap: 4px; }
.restore { width: 9px; height: 7px; }
.tray { display: flex; align-items: center; gap: 8px; height: 38px; padding: 0 0 0 6px; border: 1px solid; border-color: var(--shade) #fff #fff var(--shade); }
.clock { display: flex; align-items: center; }
.clock time { line-height: 16px; text-align: center; }
```
